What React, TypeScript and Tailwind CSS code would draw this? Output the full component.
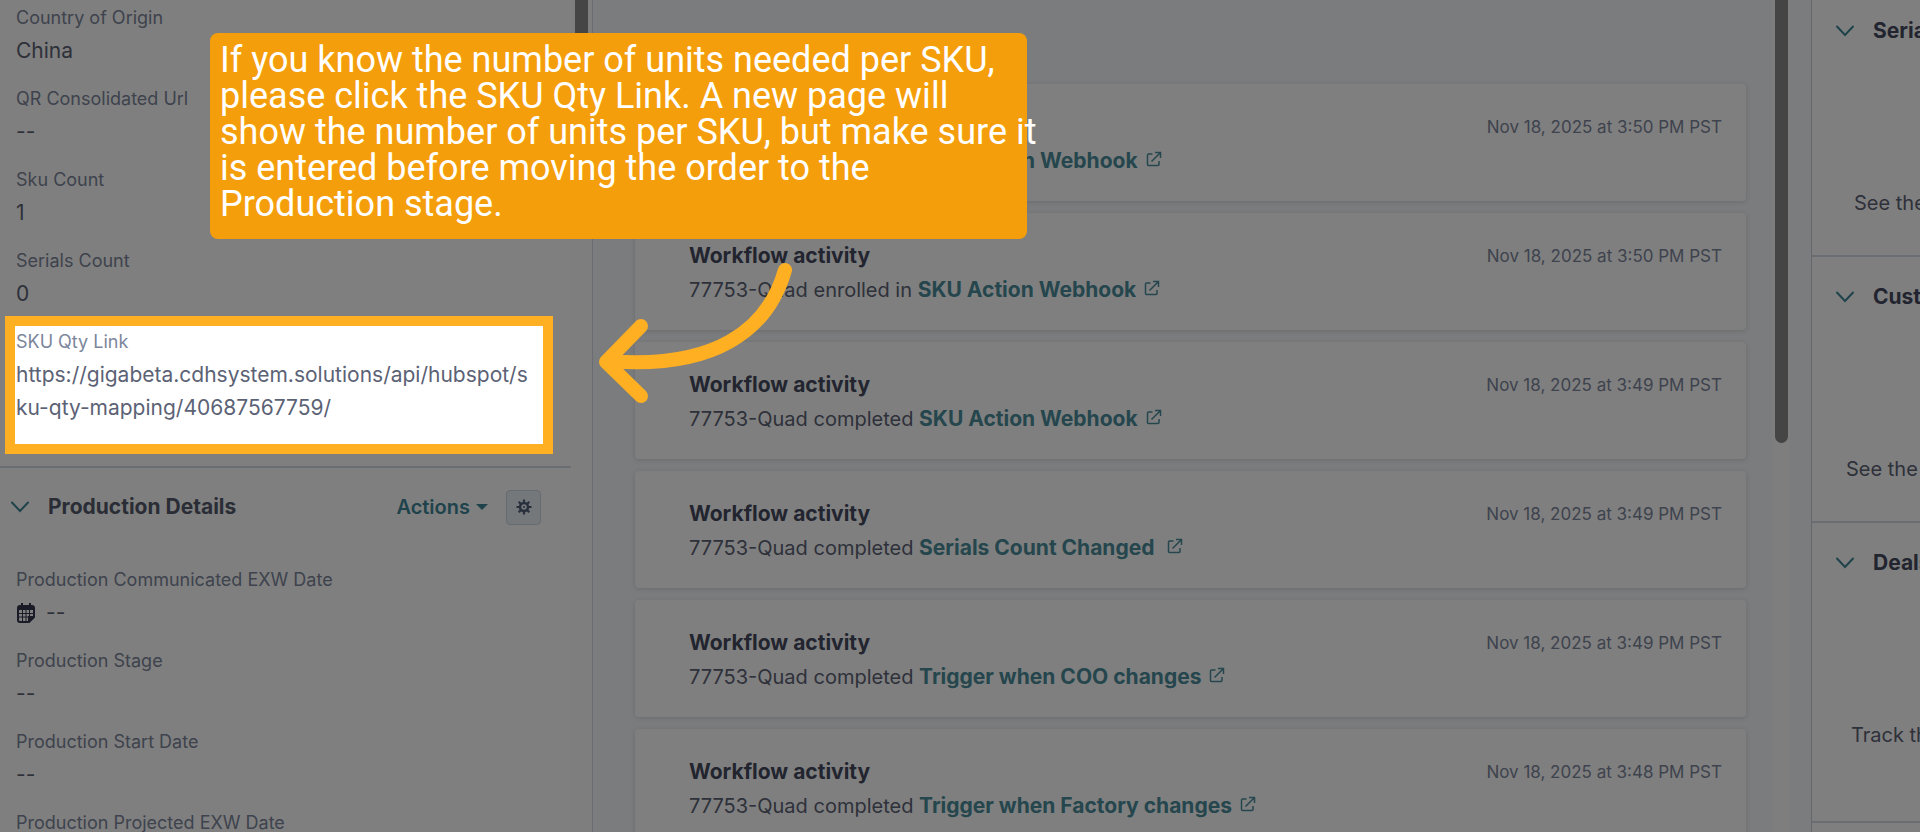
import type { ReactNode } from 'react';

type TActivity = { verb: string; workflow: string; time: string };

const activities: TActivity[] = [
  { verb: 'completed', workflow: 'SKU Action Webhook', time: '3:50' },
  { verb: 'enrolled in', workflow: 'SKU Action Webhook', time: '3:50' },
  { verb: 'completed', workflow: 'SKU Action Webhook', time: '3:49' },
  { verb: 'completed', workflow: 'Serials Count Changed ', time: '3:49' },
  { verb: 'completed', workflow: 'Trigger when COO changes', time: '3:49' },
  { verb: 'completed', workflow: 'Trigger when Factory changes', time: '3:48' },
];

const associations = [
  { title: 'Serials', text: 'See the serials', height: 'h-[266px]', indent: 'pl-[42px]' },
  { title: 'Customers', text: 'See the customers', height: 'h-[266px]', indent: 'pl-[34px]' },
  { title: 'Deals', text: 'Track the deals', height: 'h-[300px]', indent: 'pl-[39px]' },
];

function Chevron() {
  return (
    <svg viewBox="0 0 24 24" className="h-6 w-6 shrink-0 text-[#3f8797]" fill="none" stroke="currentColor" strokeWidth="2">
      <path d="M4 7.500L12 16L20 7.500" strokeLinecap="round" />
    </svg>
  );
}

function ExternalIcon() {
  return (
    <svg viewBox="0 0 16 16" className="mb-1 h-4 w-4" fill="none" stroke="currentColor" strokeWidth="1.5">
      <path d="M6.500 3H2.500Q1.500 3 1.500 4V13.500Q1.500 14.500 2.500 14.500H12Q13 14.500 13 13.500V10" />
      <path d="M9 1.500H14.500V7M14.500 1.500L5.500 10.500" />
    </svg>
  );
}

function CalendarIcon() {
  return (
    <svg viewBox="0 0 20 22" className="mr-2.5 h-[22px] w-5 text-[#33384d]" fill="none" stroke="currentColor">
      <path d="M2 6Q2 4 4 4H16Q18 4 18 6V15L13 20H4Q2 20 2 18Z" strokeWidth="2" />
      <path d="M2 4H18V8H2Z" fill="currentColor" stroke="none" />
      <path d="M6 1V5M14 1V5" strokeWidth="2" />
      <path d="M6.500 8V19M10 8V19M13.500 8V15M3 11.500H17M3 15H14" strokeWidth="1" />
      <path d="M18 14V15.500L13.500 20H12V14Z" fill="currentColor" stroke="none" />
    </svg>
  );
}

function GearIcon() {
  return (
    <svg viewBox="0 0 16 16" className="h-4 w-4" fill="none" stroke="currentColor">
      <circle cx="8" cy="8" r="4" strokeWidth="2.500" />
      <path
        d="M8 .5V4M8 12V15.500M.5 8H4M12 8H15.500M2.700 2.700L5 5M11 11L13.300 13.300M2.700 13.300L5 11M11 5L13.300 2.700"
        strokeWidth="2.200"
      />
      <circle cx="8" cy="8" r="1" fill="currentColor" stroke="none" />
    </svg>
  );
}

function Property({ label, children }: { label: string; children: ReactNode }) {
  return (
    <div className="h-[81px]">
      <dt className="text-lg leading-8 text-[#7c869b]">{label}</dt>
      <dd className="flex items-center text-[21px] leading-[34px] text-[#5c6275]">
        {children}
      </dd>
    </div>
  );
}

function ActivityCard({ verb, workflow, time }: TActivity) {
  return (
    <article className="h-[117px] shrink-0 rounded bg-white pt-[25px] pr-6 pl-[54px] shadow-[0_1px_5px_rgba(45,62,80,0.18)]">
      <div className="flex justify-between">
        <h3 className="text-[21px] leading-9 font-bold text-[#454a5e]">
          Workflow activity
        </h3>
        <time className="text-[17px] leading-9 text-[#7c869b]">
          Nov 18, 2025 at {time} PM PST
        </time>
      </div>
      <p className="flex items-center text-xl leading-8 whitespace-pre text-[#5c6275]">
        77753-Quad {verb}{' '}
        <a href="#" className="flex items-center gap-2 text-[21px] font-bold text-[#4a8d9b]">
          {workflow}
          <ExternalIcon />
        </a>
      </p>
    </article>
  );
}

export default function App() {
  return (
    <div className="relative flex h-screen overflow-hidden bg-[#f5f8fa] font-['Inter',sans-serif]">
      <aside className="flex w-[593px] shrink-0 border-r border-[#d5dde6] bg-white">
        <div className="min-w-0 flex-1">
          <dl className="pt-0.5 pl-4">
            <Property label="Country of Origin">China</Property>
            <Property label="QR Consolidated Url">--</Property>
            <Property label="Sku Count">1</Property>
            <Property label="Serials Count">0</Property>
            <div className="h-[140px]">
              <dt className="text-lg leading-8 text-[#7c869b]">SKU Qty Link</dt>
              <dd className="text-[21px] leading-[33px] text-[#5c6275]">
                https://gigabeta.cdhsystem.solutions/api/hubspot/s
                <br />
                ku-qty-mapping/40687567759/
              </dd>
            </div>
          </dl>
          <section className="border-t-2 border-[#d5dde6]">
            <header className="flex h-[78px] items-center pr-[30px] pl-2">
              <Chevron />
              <h2 className="ml-4 flex-1 text-[21px] font-bold text-[#555b6b]">
                Production Details
              </h2>
              <button className="mr-[18px] flex items-center gap-1.5 text-xl font-semibold text-[#3f8797]">
                Actions
                <span className="border-x-[6px] border-t-[6px] border-x-transparent border-t-current" />
              </button>
              <button
                aria-label="Settings"
                className="flex h-[35px] w-[35px] items-center justify-center rounded border border-[#cbd6e2] bg-[#eaf0f6] text-[#506079]"
              >
                <GearIcon />
              </button>
            </header>
            <dl className="pt-[18px] pl-4">
              <Property label="Production Communicated EXW Date">
                <CalendarIcon />
                --
              </Property>
              <Property label="Production Stage">--</Property>
              <Property label="Production Start Date">--</Property>
              <Property label="Production Projected EXW Date">--</Property>
            </dl>
          </section>
        </div>
        <div className="flex w-[21px] justify-center bg-[#fcfcfc]">
          <div className="h-32 w-[13px] rounded-b-full bg-[#8a8a8a]" />
        </div>
      </aside>

      <main className="flex min-w-0 flex-1 pr-[21px]">
        <div className="flex min-w-0 flex-1 flex-col gap-3 pt-[84px] pr-[27px] pl-[42px]">
          {activities.map((activity, i) => (
            <ActivityCard key={i} {...activity} />
          ))}
        </div>
        <div className="flex w-[17px] justify-center bg-[#fcfcfc]">
          <div className="h-[443px] w-[13px] rounded-b-full bg-[#8a8a8a]" />
        </div>
      </main>

      <aside className="-mt-[9px] w-[109px] shrink-0 border-l border-[#cbd3dc] bg-white">
        {associations.map(({ title, text, height, indent }) => (
          <section
            key={title}
            className={`overflow-hidden border-b-2 border-[#d5dde6] whitespace-nowrap ${height}`}
          >
            <header className="flex h-20 items-center gap-4 pl-[21px]">
              <Chevron />
              <h2 className="text-[21px] font-bold text-[#454a5e]">{title}</h2>
            </header>
            <p className={`pt-[116px] text-xl leading-8 text-[#5c6275] ${indent}`}>{text}</p>
          </section>
        ))}
      </aside>

      <div className="absolute top-[316px] left-[5px] h-[138px] w-[548px] border-10 border-[#ffaf22] shadow-[0_0_0_2000px_rgba(0,0,0,0.5)]" />
      <svg
        viewBox="0 0 210 150"
        className="absolute top-[255px] left-[590px] h-[150px] w-[210px]"
        fill="none"
        stroke="#ffaf22"
        strokeWidth="14"
        strokeLinecap="round"
        strokeLinejoin="round"
      >
        <path d="M195 15C178 75 125 115 17 106" />
        <path d="M51 71L16 107L51 141" />
      </svg>
      <p className="absolute top-[33px] left-[210px] h-[206px] w-[817px] rounded-lg bg-[#f59e0b] pt-[9px] pl-2.5 font-['Roboto',sans-serif] text-[36px] leading-9 whitespace-nowrap text-white">
        If you know the number of units needed per SKU,
        <br />
        please click the SKU Qty Link. A new page will
        <br />
        show the number of units per SKU, but make sure it
        <br />
        is entered before moving the order to the
        <br />
        Production stage.
      </p>
    </div>
  );
}
